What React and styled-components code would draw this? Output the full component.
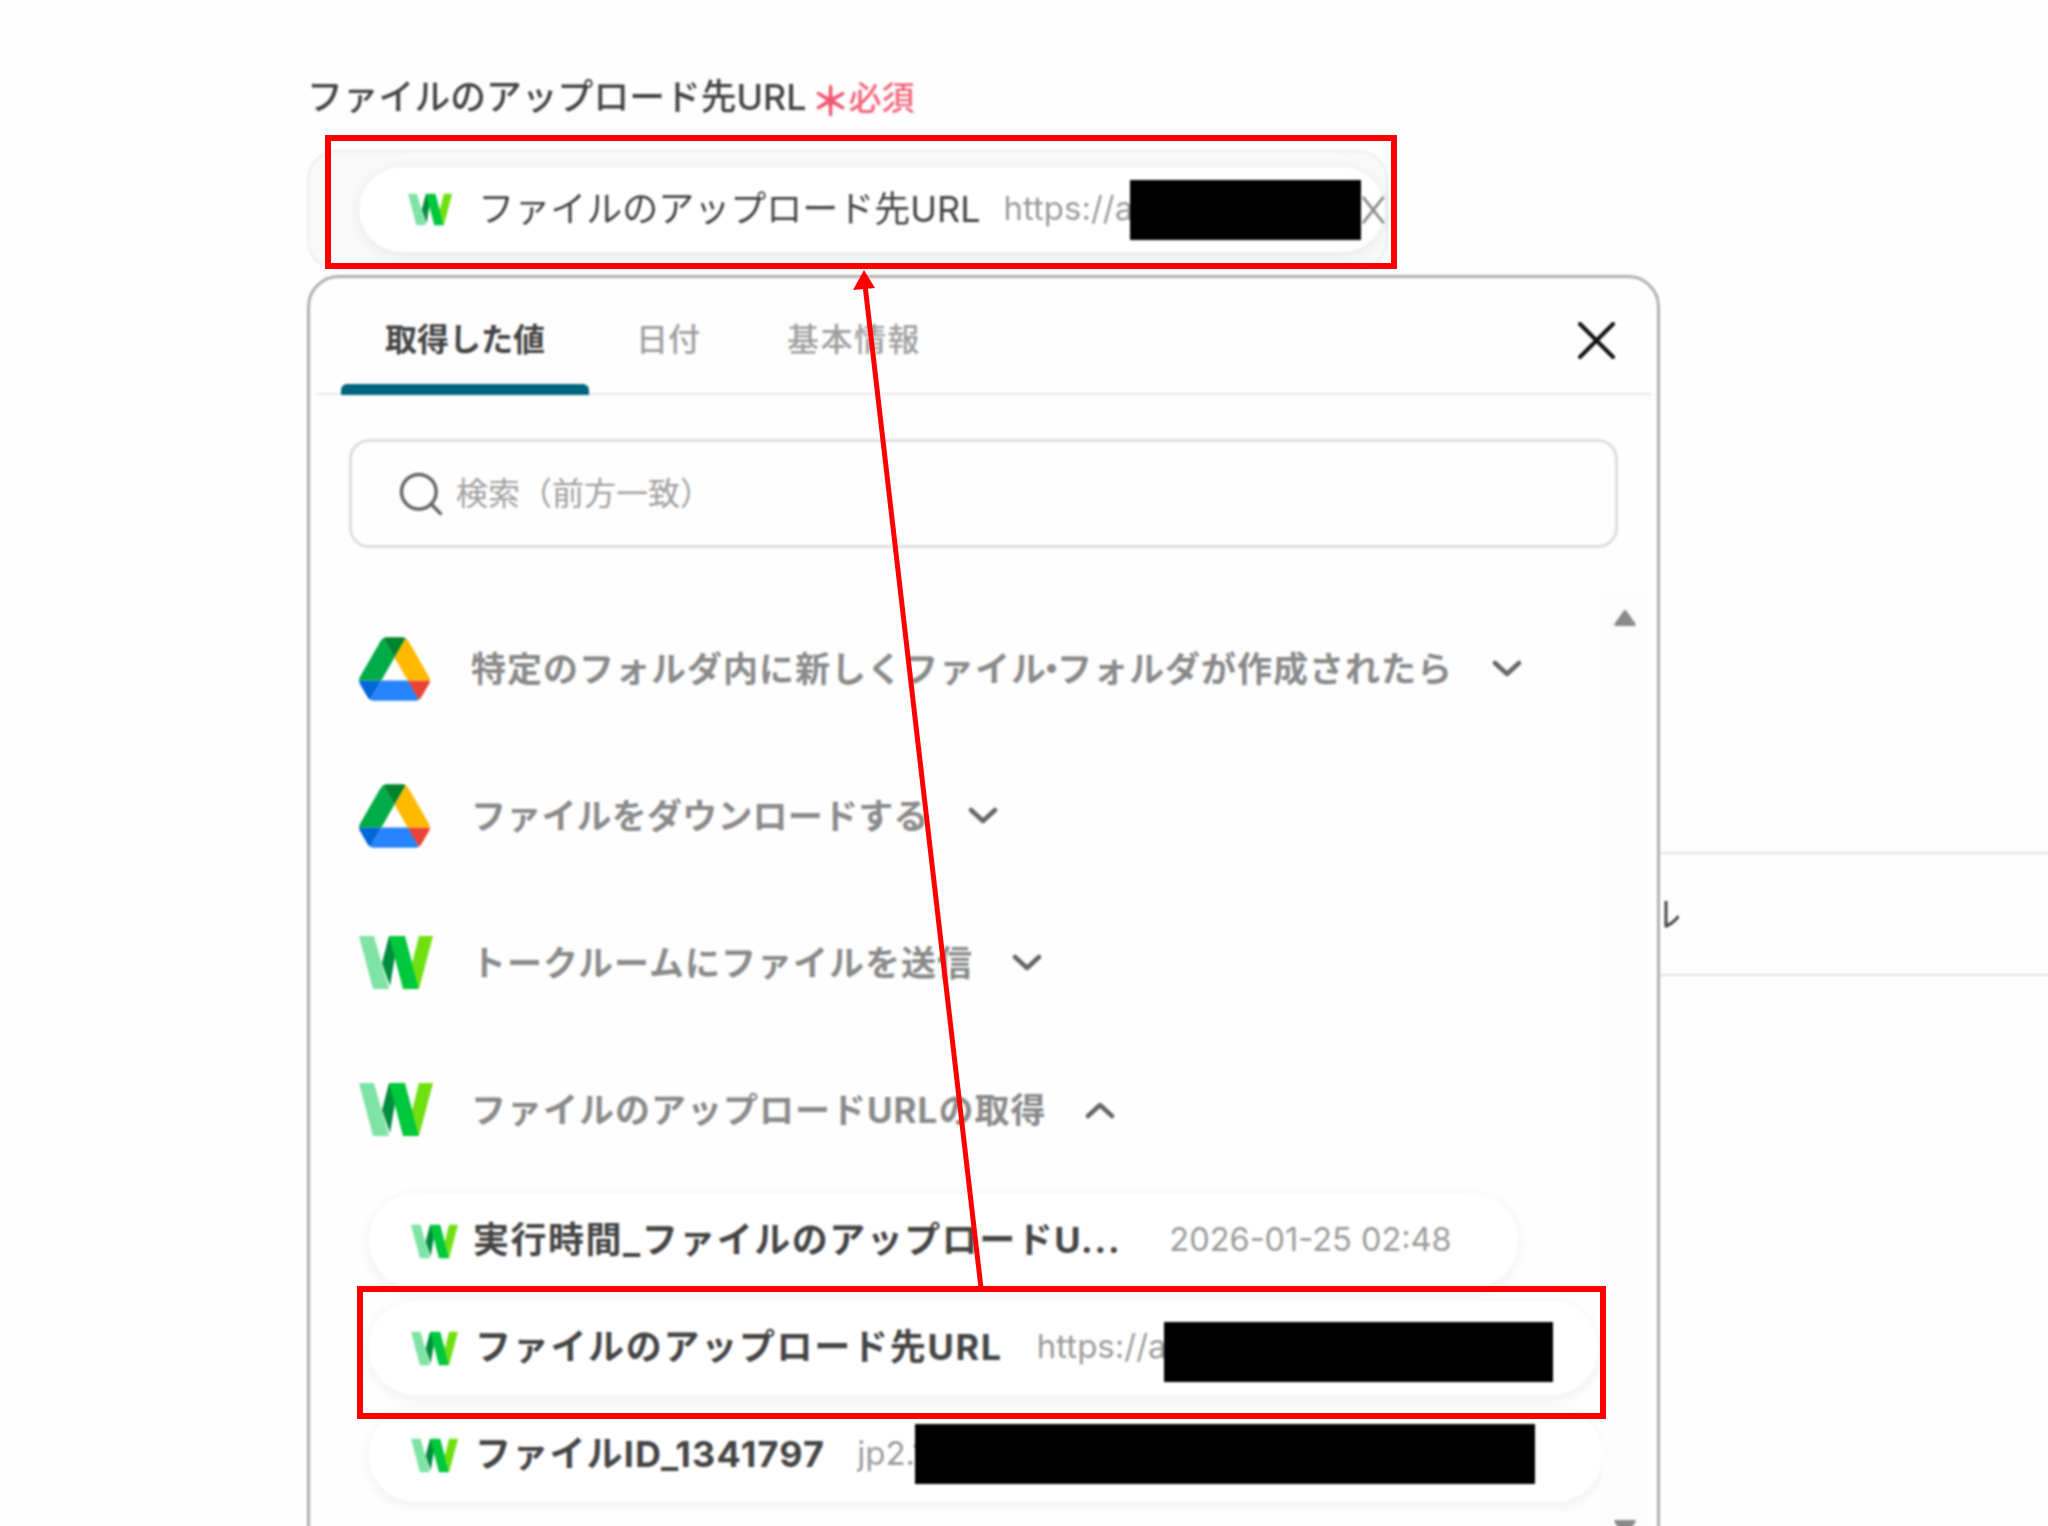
import { Search } from "lucide-react";
import styled, { createGlobalStyle } from "styled-components";

const GlobalStyle = createGlobalStyle`
  body {
    margin: 0;
    background: #fefefe;
    font-family: Inter, "Noto Sans CJK JP", sans-serif;
  }
`;

const Page = styled.div`
  position: relative;
  width: 2048px;
  height: 1526px;
  overflow: hidden;
`;

const Content = styled.div`
  padding: 72px 0 0 307px;
  filter: blur(0.8px);
`;

const Label = styled.div`
  display: flex;
  align-items: center;
  box-sizing: border-box;
  height: 50px;
  padding-bottom: 6px;
  font-size: 35.8px;
  font-weight: 500;
  color: #444;
  white-space: nowrap;
`;

const Star = styled.span`
  margin-left: 4px;
  width: 38px;
  font-size: 40px;
  font-weight: 700;
  line-height: 1;
  padding-top: 16px;
  color: #f2566f;
`;

const Required = styled.span`
  padding-top: 4px;
  font-size: 33px;
  color: #f2667c;
`;

const Field = styled.div`
  box-sizing: border-box;
  width: 1081px;
  height: 120px;
  margin: 28px 0 5px;
  padding: 15px 0 0 50px;
  border: 2px solid #ededed;
  border-radius: 30px;
  background: #f9f9f9;
`;

const Pill = styled.div`
  display: flex;
  align-items: center;
  flex: none;
  box-sizing: border-box;
  height: ${(p) => p.$height}px;
  padding-left: ${(p) => p.$pad}px;
  background: #fff;
  border-radius: 46px;
  box-shadow: 0 3px 14px rgba(0, 0, 0, 0.07);
  font-size: 36px;
  color: #444;
  white-space: nowrap;
`;

const FieldPill = styled(Pill)`
  width: 1026px;
`;

const ListPill = styled(Pill)`
  width: ${(p) => p.$width}px;
  margin: ${(p) => p.$top}px 0 0 10px;
`;

const PillText = styled.span`
  margin-left: ${(p) => p.$gap}px;
  padding-bottom: 8px;
  letter-spacing: ${(p) => p.$spacing || 0}px;
  font-weight: ${(p) => p.$weight || 400};
`;

const PillValue = styled.span`
  display: inline-block;
  flex: none;
  overflow: hidden;
  width: ${(p) => (p.$width ? `${p.$width}px` : "auto")};
  margin-left: ${(p) => p.$gap}px;
  padding-bottom: 4px;
  font-size: ${(p) => p.$size || 33}px;
  color: #9b9b9b;
`;

const Redaction = styled.div`
  flex: none;
  width: ${(p) => p.$width}px;
  height: 60px;
  margin-top: ${(p) => p.$shift || 0}px;
  background: #000;
`;

const Panel = styled.div`
  box-sizing: border-box;
  width: 1353px;
  height: 1400px;
  border: 3px solid #b0b0b0;
  border-radius: 32px;
  background: #fefefe;
  flex: none;
`;

const Under = styled.div`
  display: flex;
  align-items: flex-start;
`;

const SideRow = styled.div`
  flex: none;
  box-sizing: border-box;
  width: 400px;
  height: 124px;
  margin-top: 577px;
  padding-bottom: 6px;
  overflow: hidden;
  display: flex;
  align-items: center;
  border-top: 2px solid #e2e2e2;
  border-bottom: 2px solid #e2e2e2;
  font-size: 35px;
  color: #444;
`;

const SideText = styled.span`
  margin-left: -14px;
`;

const TabHeader = styled.div`
  display: flex;
  align-items: flex-end;
  gap: 3px;
  height: 115px;
  margin: 0 6px;
  padding: 0 36px 0 25px;
  border-bottom: 2px solid #e8e8e8;
`;

const Tab = styled.div`
  display: flex;
  flex-direction: column;
  margin: 0 0 -2px ${(p) => p.$nudge || 0}px;
  font-size: 32px;
  line-height: 46px;
  letter-spacing: ${(p) => p.$spacing || 0}px;
  font-weight: ${(p) => (p.$active ? 700 : 500)};
  color: ${(p) => (p.$active ? "#444" : "#a0a0a0")};
`;

const TabLabel = styled.span`
  padding: 0 44px 21px;
`;

const TabBar = styled.span`
  height: 11px;
  border-radius: 6px 6px 0 0;
  background: ${(p) => (p.$active ? "#00657e" : "transparent")};
`;

const CloseButton = styled.svg`
  width: 37px;
  height: 37px;
  margin: 0 0 34px auto;
`;

const SearchBox = styled.div`
  display: flex;
  align-items: center;
  gap: 9px;
  box-sizing: border-box;
  width: 1269px;
  height: 109px;
  margin: 44px 0 0 39px;
  padding: 0 0 0 43px;
  border: 3px solid #dedede;
  border-radius: 20px;
  font-size: 32px;
  color: #a0a0a0;
`;

const SearchText = styled.span`
  padding-bottom: 6px;
`;

const ListArea = styled.div`
  display: flex;
  margin-top: 43px;
  padding-left: 49px;
`;

const Rows = styled.div`
  flex: none;
  width: 1243px;
  padding-top: 4px;
`;

const GroupRow = styled.div`
  display: flex;
  align-items: center;
  height: 147px;
  font-size: 35px;
  font-weight: 700;
  color: #8a8a8a;
  white-space: nowrap;
`;

const GroupIcon = styled.div`
  display: flex;
  align-items: center;
  width: 112px;
  flex: none;
`;

const GroupName = styled.span`
  margin-right: 39px;
  padding-bottom: 5px;
  letter-spacing: ${(p) => p.$spacing || 0}px;
`;

const MiddleDot = styled.span`
  margin: 0 -13px;
`;

const Track = styled.div`
  display: flex;
  flex-direction: column;
  justify-content: space-between;
  align-items: center;
  flex: none;
  box-sizing: border-box;
  width: 45px;
  height: 946px;
  padding-top: 18px;
  background: #fcfcfc;
`;

const Chevron = ({ up }) => (
  <svg width="30" height="18" viewBox="0 0 30 18" fill="none" stroke="#666" strokeWidth="4.5" strokeLinecap="round" strokeLinejoin="round">
    <path d={up ? "M3 15 L15 4 L27 15" : "M3 3 L15 14 L27 3"} />
  </svg>
);

const Triangle = ({ down }) => (
  <svg width="24" height="18" viewBox="0 0 24 18" fill="#8a8a8a">
    <path d={down ? "M3 1 H21 Q24 1 22 4 L13.5 16 Q12 18 10.5 16 L2 4 Q0 1 3 1Z" : "M3 17 H21 Q24 17 22 14 L13.5 2 Q12 0 10.5 2 L2 14 Q0 17 3 17Z"} />
  </svg>
);

const DriveLogo = () => (
  <svg width="71" height="64" viewBox="0 0 87.3 78">
    <path d="m6.6 66.85 3.85 6.65c.8 1.4 1.95 2.5 3.3 3.3l13.75-23.8h-27.5c0 1.55.4 3.1 1.2 4.5z" fill="#0066da" />
    <path d="m43.65 25-13.75-23.8c-1.35.8-2.5 1.9-3.3 3.3l-25.4 44a9.06 9.06 0 0 0 -1.2 4.5h27.5z" fill="#00ac47" />
    <path d="m73.55 76.8c1.35-.8 2.5-1.9 3.3-3.3l1.6-2.75 7.65-13.25c.8-1.4 1.2-2.95 1.2-4.5h-27.502l5.852 11.5z" fill="#ea4335" />
    <path d="m43.65 25 13.75-23.8c-1.35-.8-2.9-1.2-4.5-1.2h-18.5c-1.6 0-3.15.45-4.5 1.2z" fill="#00832d" />
    <path d="m59.8 53h-32.3l-13.75 23.8c1.35.8 2.9 1.2 4.5 1.2h50.8c1.6 0 3.15-.45 4.5-1.2z" fill="#2684fc" />
    <path d="m73.4 26.5-12.7-22c-.8-1.4-1.95-2.5-3.3-3.3l-13.75 23.8 16.15 28h27.45c0-1.55-.4-3.1-1.2-4.5z" fill="#ffba00" />
  </svg>
);

const WLogo = ({ width, height }) => (
  <svg width={width} height={height} viewBox="0 0 74 53">
    <polygon points="0,0 15,0 30,53 14,53" fill="#7fe3a5" />
    <polygon points="30,0 38,8 31,50 23,27" fill="#008c3e" />
    <polygon points="30,0 46,0 60,53 44,53" fill="#00c83c" />
    <polygon points="60,0 74,0 60,53 53,28" fill="#6fe010" />
  </svg>
);

const Annotation = styled.div`
  position: absolute;
  left: ${(p) => p.$x}px;
  top: ${(p) => p.$y}px;
  width: ${(p) => p.$w}px;
  height: ${(p) => p.$h}px;
  box-sizing: border-box;
  border: 6px solid #f00;
`;

const ArrowLayer = styled.svg`
  position: absolute;
  left: 0;
  top: 0;
`;

const groups = [
  {
    id: "trigger",
    name: (
      <>
        特定のフォルダ内に新しくファイル<MiddleDot>・</MiddleDot>フォルダが作成されたら
      </>
    ),
    logo: "drive",
    spacing: 1,
  },
  { id: "download", name: "ファイルをダウンロードする", logo: "drive", spacing: 0.2 },
  { id: "send", name: "トークルームにファイルを送信", logo: "w", spacing: 1 },
  { id: "url", name: "ファイルのアップロードURLの取得", logo: "w", spacing: 1, up: true },
];

export default function App() {
  return (
    <>
      <GlobalStyle />
      <Page>
        <Content>
          <Label>
            ファイルのアップロード先URL
            <Star>＊</Star>
            <Required>必須</Required>
          </Label>

          <Field>
            <FieldPill $height={85} $pad={49}>
              <WLogo width={47} height={35} />
              <PillText $gap={26}>ファイルのアップロード先URL</PillText>
              <PillValue $gap={23} $width={126}>https://a</PillValue>
              <Redaction $width={231} />
              <svg width="26" height="32" viewBox="0 0 26 32" fill="none" stroke="#8c8c8c" strokeWidth="3">
                <path d="M2 2 L24 30 M24 2 L2 30" />
              </svg>
            </FieldPill>
          </Field>

          <Under>
            <Panel>
              <TabHeader>
                <Tab $active>
                  <TabLabel>取得した値</TabLabel>
                  <TabBar $active />
                </Tab>
                <Tab>
                  <TabLabel>日付</TabLabel>
                  <TabBar />
                </Tab>
                <Tab $spacing={1.5} $nudge={-4}>
                  <TabLabel>基本情報</TabLabel>
                  <TabBar />
                </Tab>
                <CloseButton viewBox="0 0 37 37" fill="none" stroke="#111" strokeWidth="4" strokeLinecap="round">
                  <path d="M2 2 L35 35 M35 2 L2 35" />
                </CloseButton>
              </TabHeader>

              <SearchBox>
                <Search size={52} strokeWidth={1.6} color="#666" />
                <SearchText>検索（前方一致）</SearchText>
              </SearchBox>

              <ListArea>
                <Rows>
                  {groups.map((g) => (
                    <GroupRow key={g.id}>
                      <GroupIcon>
                        {g.logo === "drive" ? <DriveLogo /> : <WLogo width={74} height={53} />}
                      </GroupIcon>
                      <GroupName $spacing={g.spacing}>{g.name}</GroupName>
                      <Chevron up={g.up} />
                    </GroupRow>
                  ))}

                  <ListPill $height={94} $pad={42} $width={1149} $top={11}>
                    <WLogo width={47} height={35} />
                    <PillText $gap={15} $weight={700} $spacing={1.5}>実行時間_ファイルのアップロードU...</PillText>
                    <PillValue $gap={48} $size={32.5}>2026-01-25 02:48</PillValue>
                  </ListPill>

                  <ListPill $height={94} $pad={42} $width={1229} $top={13}>
                    <WLogo width={47} height={35} />
                    <PillText $gap={17} $weight={700} $spacing={1.7}>ファイルのアップロード先URL</PillText>
                    <PillValue $gap={34} $width={127}>https://a</PillValue>
                    <Redaction $width={389} $shift={8} />
                  </ListPill>

                  <ListPill $height={94} $pad={42} $width={1233} $top={13}>
                    <WLogo width={47} height={35} />
                    <PillText $gap={17} $weight={700} $spacing={1.2}>ファイルID_1341797</PillText>
                    <PillValue $gap={32} $width={58}>jp2.1</PillValue>
                    <Redaction $width={620} $shift={-3} />
                  </ListPill>
                </Rows>
                <Track>
                  <Triangle />
                  <Triangle down />
                </Track>
              </ListArea>
            </Panel>

            <SideRow>
              <SideText>ル</SideText>
            </SideRow>
          </Under>
        </Content>

        <Annotation $x={325} $y={135} $w={1072} $h={134} />
        <Annotation $x={357} $y={1286} $w={1249} $h={133} />
        <ArrowLayer width="2048" height="1526" viewBox="0 0 2048 1526">
          <line x1="981" y1="1288" x2="865" y2="285" stroke="#f00" strokeWidth="5" />
          <polygon points="864,270 853,290 875,288" fill="#f00" />
        </ArrowLayer>
      </Page>
    </>
  );
}
